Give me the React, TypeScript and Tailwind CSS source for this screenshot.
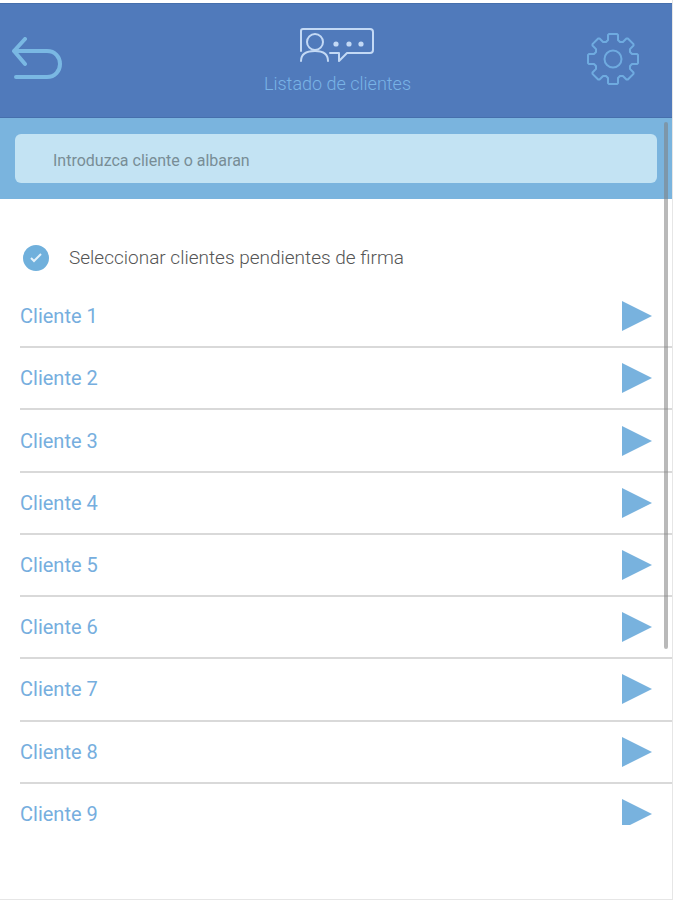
import { useState } from "react";

const clients = [1, 2, 3, 4, 5, 6, 7, 8, 9].map((n) => `Cliente ${n}`);

// Outline of one gear tooth pointing up, around the origin.
const tooth: [number, number][] = [
  [-7, -17],
  [-5, -19],
  [-5, -24],
  [-4, -25],
  [4, -25],
  [5, -24],
  [5, -19],
  [7, -17],
];

const gearPoints = Array.from({ length: 8 }, (_, i) => {
  const a = (i * Math.PI) / 4;
  return tooth
    .map(([x, y]) => {
      const px = x * Math.cos(a) - y * Math.sin(a);
      const py = x * Math.sin(a) + y * Math.cos(a);
      return `${px.toFixed(2)},${py.toFixed(2)}`;
    })
    .join(" ");
}).join(" ");

function BackIcon() {
  return (
    <svg width="52" height="44" viewBox="0 0 52 44" fill="none" stroke="#7ab8e3" strokeWidth="4" strokeLinecap="round" strokeLinejoin="round" aria-hidden="true">
      <path d="M14 2 L3 14 L14 27 M3 14 H36 C44 14 49 20 49 27 C49 34 44 40 36 40 H5" />
    </svg>
  );
}

function ClientsIcon() {
  return (
    <svg width="76" height="38" viewBox="0 0 76 38" fill="none" stroke="#c3d9f5" strokeWidth="2" strokeLinecap="round" strokeLinejoin="round" aria-hidden="true">
      <path d="M2 25 V5 Q2 3 4 3 H71 Q74 3 74 6 V24 Q74 27 71 27 H48 L40 35 V27 H31" />
      <circle cx="16" cy="16" r="8" />
      <path d="M2 35 C2 28 8 25 16 25 C24 25 29 28 29 35" />
      <g fill="#c3d9f5" stroke="none">
        <circle cx="37" cy="18" r="2.6" />
        <circle cx="50" cy="18" r="2.6" />
        <circle cx="62" cy="18" r="2.6" />
      </g>
    </svg>
  );
}

function GearIcon() {
  return (
    <svg width="54" height="54" viewBox="-27 -27 54 54" fill="none" stroke="#6fabe0" strokeWidth="2" strokeLinejoin="round" aria-hidden="true">
      <polygon points={gearPoints} />
      <circle r="8.5" />
    </svg>
  );
}

export default function App() {
  const [query, setQuery] = useState("");
  const [pending, setPending] = useState(true);

  return (
    <div className="flex min-h-screen flex-col border-r border-b border-[#e6e6e6] bg-white pt-[3px] font-['Roboto',sans-serif]">
      <header className="grid h-[115px] grid-cols-[1fr_auto_1fr] items-center border-t border-b border-[#466fac] bg-[#507abb] pr-8 pb-1 pl-[11px]">
        <button type="button" aria-label="Volver" className="justify-self-start">
          <BackIcon />
        </button>
        <div className="flex flex-col items-center gap-2 pt-1 pl-6">
          <ClientsIcon />
          <h1 className="text-lg leading-6 font-light text-[#79b3e6]">Listado de clientes</h1>
        </div>
        <button type="button" aria-label="Ajustes" className="justify-self-end">
          <GearIcon />
        </button>
      </header>

      <div className="relative">
        <div className="bg-[#7ab4de] px-[15px] py-4">
          <input
            type="text"
            aria-label="Introduzca cliente o albaran"
            placeholder="Introduzca cliente o albaran"
            value={query}
            onChange={(e) => setQuery(e.target.value)}
            className="block h-[49px] w-full rounded-md bg-[#c3e3f3] px-[38px] pt-1 text-base text-[#788d96] outline-none placeholder:text-[#788d96]"
          />
        </div>

        <main>
          <label className="flex h-[87px] items-center gap-5 pt-[31px] pl-[23px] text-[19px] font-light text-[#555555]">
            <span className="grid size-[26px] place-items-center">
              <input
                type="checkbox"
                checked={pending}
                onChange={(e) => setPending(e.target.checked)}
                className="col-start-1 row-start-1 size-[26px] appearance-none rounded-full border-2 border-[#70b0dc] checked:bg-[#70b0dc]"
              />
              {pending && (
                <svg width="12" height="10" viewBox="0 0 12 10" fill="none" stroke="#e4f2fb" strokeWidth="2" className="pointer-events-none col-start-1 row-start-1" aria-hidden="true">
                  <path d="M1 5 L4 8 L11 1" />
                </svg>
              )}
            </span>
            Seleccionar clientes pendientes de firma
          </label>

          <div className="h-[539px] overflow-hidden pl-5">
            <ul className="grid h-[560px] auto-rows-fr">
              {clients.map((name) => (
                <li key={name} className="border-b-2 border-[#d9d9d9]">
                  <button type="button" className="flex h-full w-full items-center justify-between pr-5 text-left text-xl leading-5 text-[#76aede]">
                    {name}
                    <svg width="30" height="30" viewBox="0 0 30 30" fill="#78b2de" aria-hidden="true">
                      <path d="M0 0 L30 15 L0 30 Z" />
                    </svg>
                  </button>
                </li>
              ))}
            </ul>
          </div>
        </main>

        <div className="absolute top-1 right-1 h-[527px] w-1 rounded-sm bg-[#808080]/55" />
      </div>
    </div>
  );
}
